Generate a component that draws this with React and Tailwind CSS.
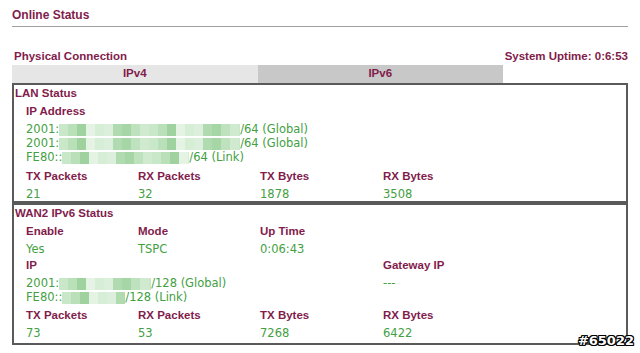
const label = "text-[#821c4c] font-bold text-[11.5px] [font-family:'Liberation_Sans',Arial,sans-serif]";
const value = "text-[#43a043] text-[11.5px] [font-family:'DejaVu_Sans',Verdana,sans-serif]";

const mosaic = [
  "bg-[#b9e0b9]", "bg-[#d6eed6]", "bg-[#a6d6a6]", "bg-[#c9e7c9]", "bg-[#e4f3e4]",
  "bg-[#b0dbb0]", "bg-[#cfeacf]", "bg-[#9fd29f]", "bg-[#dcefdc]", "bg-[#bde2bd]",
];

function Blur({ width }) {
  const cells = Math.ceil(width / 9);
  return (
    <span className="inline-flex h-[12px] overflow-hidden" style={{ width }}>
      {Array.from({ length: cells }).map((_, i) => (
        <span key={i} className={`w-[9px] h-full shrink-0 ${mosaic[(i * 7 + 3) % mosaic.length]}`} />
      ))}
    </span>
  );
}

function IpLine({ prefix, blur, suffix }) {
  return (
    <div className={`h-[14px] flex items-center whitespace-pre ${value}`}>
      <span>{prefix}</span>
      <Blur width={blur} />
      <span>{suffix}</span>
    </div>
  );
}

function Cols({ items, className, cls }) {
  return (
    <div className={`grid grid-cols-[112px_122px_123px_1fr] items-center ${className}`}>
      {items.map((t, i) => (
        <div key={i} className={cls}>{t}</div>
      ))}
    </div>
  );
}

export default function App() {
  return (
    <div className="relative w-[640px] h-[353px] bg-white overflow-hidden">
      <div className="px-[12px]">
        {/* Title */}
        <div className="h-[27px] flex items-center pt-[4px] border-b border-[#a0a0a0] text-[#821c4c] font-bold text-[12px] [font-family:'Liberation_Sans',Arial,sans-serif]">
          Online Status
        </div>

        <div className="h-[23px]" />
        <div className="flex items-center justify-between h-[14px] pl-[2px]">
          <span className={label}>Physical Connection</span>
          <span className={label}>System Uptime: 0:6:53</span>
        </div>

        {/* Tabs */}
        <div className="flex h-[18px] mt-[1px] w-[491px]">
          <div className={`flex-1 bg-[#e6e6e6] flex items-center justify-center ${label}`}>IPv4</div>
          <div className={`flex-1 bg-[#c8c8c8] flex items-center justify-center ${label}`}>IPv6</div>
        </div>

        {/* LAN Status */}
        <div className="border-2 border-[#5a5a5a] pl-[1px]">
          <div className={`h-[16px] flex items-center pt-[1px] ${label}`}>LAN Status</div>
          <div className="pl-[11px]">
            <div className={`h-[22px] flex items-center ${label}`}>IP Address</div>
            <IpLine prefix="2001:" blur={181} suffix="/64 (Global)" />
            <IpLine prefix="2001:" blur={181} suffix="/64 (Global)" />
            <IpLine prefix="FE80::" blur={127} suffix="/64 (Link)" />
            <Cols className="h-[18px] pt-[3px]" cls={label} items={["TX Packets", "RX Packets", "TX Bytes", "RX Bytes"]} />
            <Cols className="h-[18px] pt-[3px]" cls={value} items={["21", "32", "1878", "3508"]} />
          </div>
        </div>

        {/* WAN2 IPv6 Status */}
        <div className="border-2 border-t-0 border-[#5a5a5a] pl-[1px]">
          <div className="border-t-2 border-[#5a5a5a] -ml-[1px]" />
          <div className={`h-[18px] flex items-center ${label}`}>WAN2 IPv6 Status</div>
          <div className="pl-[11px]">
            <Cols className="h-[18px]" cls={label} items={["Enable", "Mode", "Up Time", ""]} />
            <Cols className="h-[16px]" cls={value} items={["Yes", "TSPC", "0:06:43", ""]} />
            <Cols className="h-[18px]" cls={label} items={["IP", "", "", "Gateway IP"]} />
            <div className="grid grid-cols-[357px_1fr] pt-[2px]">
              <div>
                <IpLine prefix="2001:" blur={92} suffix="/128 (Global)" />
                <IpLine prefix="FE80::" blur={63} suffix="/128 (Link)" />
              </div>
              <div className={`h-[14px] flex items-center ${value}`}>---</div>
            </div>
            <Cols className="h-[20px] pt-[1px]" cls={label} items={["TX Packets", "RX Packets", "TX Bytes", "RX Bytes"]} />
            <Cols className="h-[18px]" cls={value} items={["73", "53", "7268", "6422"]} />
          </div>
        </div>
      </div>

      {/* Watermark */}
      <div className="absolute right-[6px] bottom-[3px] text-white font-bold text-[13px] [font-family:'DejaVu_Sans',sans-serif] [text-shadow:1px_0_0_#000,-1px_0_0_#000,0_1px_0_#000,0_-1px_0_#000,1px_1px_0_#000,-1px_-1px_0_#000,1px_-1px_0_#000,-1px_1px_0_#000]">
        #65022
      </div>
    </div>
  );
}
